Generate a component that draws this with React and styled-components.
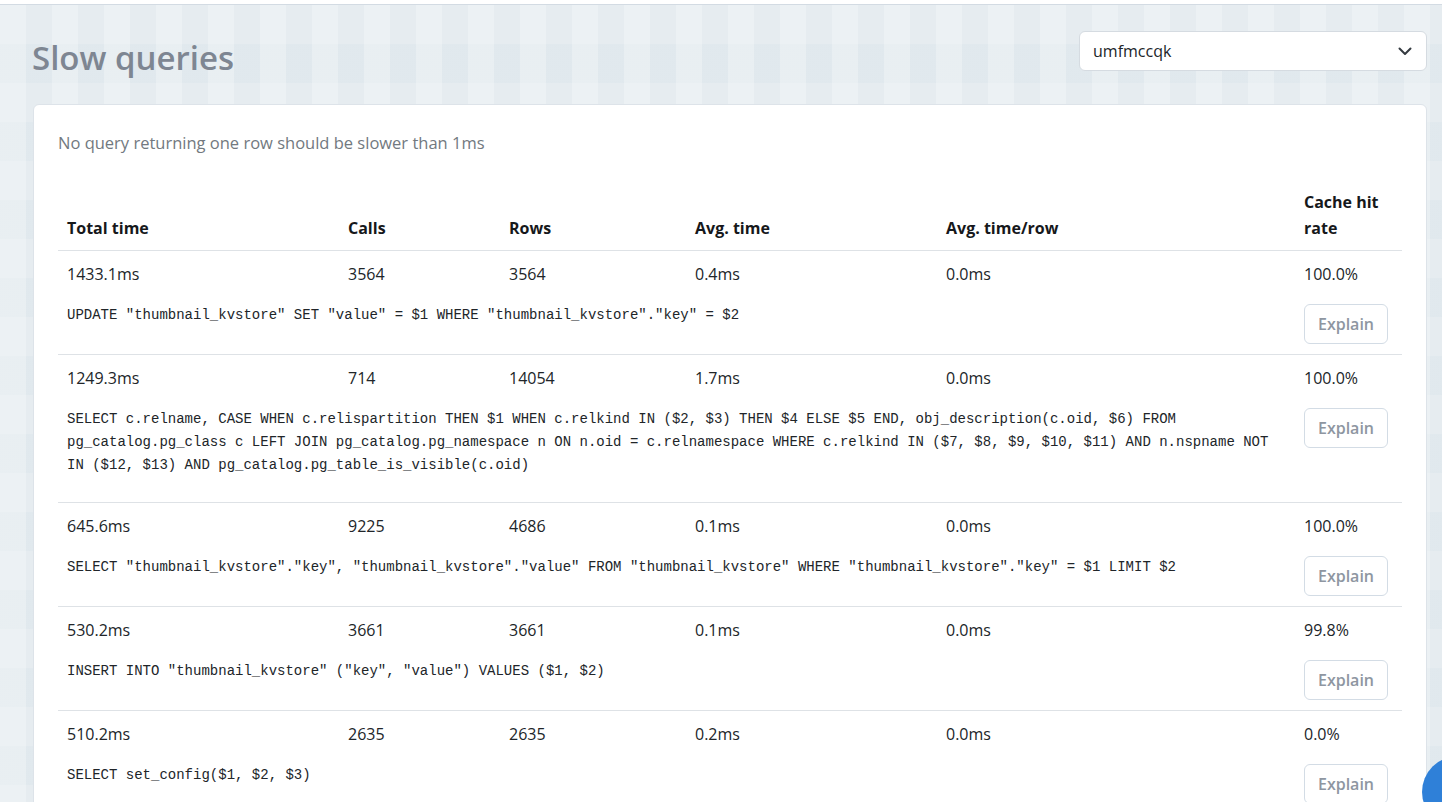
import React from 'react';
import styled, { createGlobalStyle } from 'styled-components';

const GlobalStyle = createGlobalStyle`
  html, body {
    margin: 0;
    padding: 0;
  }
  body {
    font-family: "Open Sans", "Noto Sans", sans-serif;
    color: #212529;
    background: #e6ecf0;
    overflow: hidden;
  }
`;

const queries = [
  {
    total: '1433.1ms', calls: '3564', rows: '3564', avg: '0.4ms', avgRow: '0.0ms', cache: '100.0%',
    sql: 'UPDATE "thumbnail_kvstore" SET "value" = $1 WHERE "thumbnail_kvstore"."key" = $2',
  },
  {
    total: '1249.3ms', calls: '714', rows: '14054', avg: '1.7ms', avgRow: '0.0ms', cache: '100.0%',
    sql: 'SELECT c.relname, CASE WHEN c.relispartition THEN $1 WHEN c.relkind IN ($2, $3) THEN $4 ELSE $5 END, obj_description(c.oid, $6) FROM pg_catalog.pg_class c LEFT JOIN pg_catalog.pg_namespace n ON n.oid = c.relnamespace WHERE c.relkind IN ($7, $8, $9, $10, $11) AND n.nspname NOT IN ($12, $13) AND pg_catalog.pg_table_is_visible(c.oid)',
  },
  {
    total: '645.6ms', calls: '9225', rows: '4686', avg: '0.1ms', avgRow: '0.0ms', cache: '100.0%',
    sql: 'SELECT "thumbnail_kvstore"."key", "thumbnail_kvstore"."value" FROM "thumbnail_kvstore" WHERE "thumbnail_kvstore"."key" = $1 LIMIT $2',
  },
  {
    total: '530.2ms', calls: '3661', rows: '3661', avg: '0.1ms', avgRow: '0.0ms', cache: '99.8%',
    sql: 'INSERT INTO "thumbnail_kvstore" ("key", "value") VALUES ($1, $2)',
  },
  {
    total: '510.2ms', calls: '2635', rows: '2635', avg: '0.2ms', avgRow: '0.0ms', cache: '0.0%',
    sql: 'SELECT set_config($1, $2, $3)',
  },
];

const columns = [
  { label: 'Total time', width: 281 },
  { label: 'Calls', width: 161 },
  { label: 'Rows', width: 186 },
  { label: 'Avg. time', width: 251 },
  { label: 'Avg. time/row', width: 358 },
  { label: 'Cache hit rate', width: 107 },
];

export default function App() {
  return (
    <>
      <GlobalStyle />
      <TopStrip />
      <Page>
        <Header>
          <Title>Slow queries</Title>
          <SelectWrap>
            <Select defaultValue="umfmccqk">
              <option value="umfmccqk">umfmccqk</option>
            </Select>
            <Chevron width="14" height="9" viewBox="0 0 14 9">
              <path d="M1.5 1.5 L7 7 L12.5 1.5" fill="none" stroke="#343a40" strokeWidth="2" strokeLinecap="round" strokeLinejoin="round" />
            </Chevron>
          </SelectWrap>
        </Header>

        <Card>
          <Lead>No query returning one row should be slower than 1ms</Lead>
          <Table>
            <colgroup>
              {columns.map((c) => <col key={c.label} style={{ width: c.width }} />)}
            </colgroup>
            <thead>
              <tr>
                {columns.map((c) => <Th key={c.label}>{c.label}</Th>)}
              </tr>
            </thead>
            <tbody>
              {queries.map((q, i) => (
                <React.Fragment key={i}>
                  <tr>
                    <Td>{q.total}</Td>
                    <Td>{q.calls}</Td>
                    <Td>{q.rows}</Td>
                    <Td>{q.avg}</Td>
                    <Td>{q.avgRow}</Td>
                    <Td>{q.cache}</Td>
                  </tr>
                  <tr>
                    <SqlCell colSpan={5}>
                      <Sql>{q.sql}</Sql>
                    </SqlCell>
                    <SqlCell>
                      <ExplainButton>Explain</ExplainButton>
                    </SqlCell>
                  </tr>
                </React.Fragment>
              ))}
            </tbody>
          </Table>
        </Card>
      </Page>
      <Fab />
    </>
  );
}

const TopStrip = styled.div`
  height: 4px;
  background: #ffffff;
  border-bottom: 1px solid #d3dbe3;
`;

const Page = styled.div`
  min-height: 900px;
  padding: 26px 15px 0 33px;
  background-color: #e6ecf0;
  background-image:
    linear-gradient(90deg, rgba(255,255,255,0.25) 50%, transparent 50%),
    linear-gradient(0deg, rgba(210,222,230,0.25) 50%, transparent 50%);
  background-size: 52px 52px, 78px 78px;
`;

const Header = styled.div`
  display: flex;
  justify-content: space-between;
  align-items: flex-start;
  height: 45px;
`;

const Title = styled.h1`
  margin: 7px 0 0 -1px;
  font-size: 33px;
  line-height: 40px;
  font-weight: 600;
  color: #7e8692;
`;

const SelectWrap = styled.div`
  position: relative;
  width: 348px;
`;

const Select = styled.select`
  appearance: none;
  width: 100%;
  height: 40px;
  padding: 0 40px 0 13px;
  border: 1px solid #d5dbe1;
  border-radius: 6px;
  background: #ffffff;
  font-family: "Open Sans", "Noto Sans", sans-serif;
  font-size: 16px;
  color: #212529;
`;

const Chevron = styled.svg`
  position: absolute;
  right: 15px;
  top: 16px;
  pointer-events: none;
`;

const Card = styled.div`
  margin-top: 28px;
  background: #ffffff;
  border: 1px solid #dde3e9;
  border-radius: 6px;
  padding: 26px 24px 40px;
`;

const Lead = styled.p`
  margin: 0 0 24px;
  font-size: 16.5px;
  line-height: 24px;
  color: #727980;
`;

const Table = styled.table`
  width: 100%;
  table-layout: fixed;
  border-collapse: collapse;
  font-size: 16px;
`;

const Th = styled.th`
  text-align: left;
  vertical-align: bottom;
  padding: 10px 8px 9px 9px;
  font-weight: 700;
  line-height: 26px;
  color: #16181b;
  border-bottom: 1px solid #dee2e6;
`;

const Td = styled.td`
  padding: 11px 8px 9px 9px;
  line-height: 24px;
  vertical-align: top;
  color: #212529;
`;

const SqlCell = styled.td`
  padding: 9px 8px 10px 9px;
  vertical-align: top;
  border-bottom: 1px solid #dee2e6;
`;

const Sql = styled.pre`
  margin: 0 0 15px;
  font-family: "Liberation Mono", "DejaVu Sans Mono", monospace;
  font-size: 14px;
  line-height: 23px;
  white-space: pre-wrap;
  color: #212529;
`;

const ExplainButton = styled.button`
  display: block;
  width: 84px;
  height: 40px;
  padding: 0;
  border: 1px solid #d3dce5;
  border-radius: 6px;
  background: #ffffff;
  font-family: "Open Sans", "Noto Sans", sans-serif;
  font-size: 16px;
  font-weight: 600;
  color: #8e96a1;
`;

const Fab = styled.div`
  position: fixed;
  left: 1422px;
  top: 756px;
  width: 72px;
  height: 72px;
  border-radius: 50%;
  background: #2f80d8;
`;
